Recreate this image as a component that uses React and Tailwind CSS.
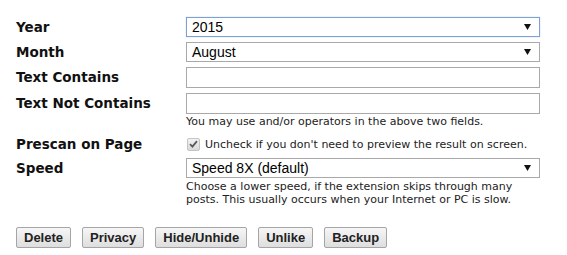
import React from "react";

const label = "w-[186px] shrink-0 pl-4 text-[13.5px] font-bold text-[#111] leading-[20px] [font-family:'DejaVu_Sans',Verdana,sans-serif]";
const small = "text-[11px] leading-[13px] text-[#222] [font-family:'DejaVu_Sans',Tahoma,sans-serif]";

function Select({ value, focused }) {
  return (
    <div
      className={`w-[354px] h-[20px] flex items-center justify-between bg-white pl-[5px] pr-[8px] border ${
        focused ? "border-[#7da2ce] shadow-[0_0_1px_#9ec3ea]" : "border-[#a9a9a9]"
      }`}
    >
      <span className="text-[14px] text-black [font-family:'Liberation_Sans',Arial,sans-serif] leading-none">{value}</span>
      <svg width="7" height="6" viewBox="0 0 7 6"><path d="M0 0H7L3.5 6Z" fill="#111" /></svg>
    </div>
  );
}

function Input() {
  return <div className="w-[354px] h-[21px] bg-white border border-[#a9a9a9]" />;
}

function Btn({ children }) {
  return (
    <div className="h-[21px] px-[7px] flex items-center border border-[#a5a5a5] rounded-[2px] bg-gradient-to-b from-[#f6f6f6] to-[#dedede] text-[13px] font-bold text-[#222] [font-family:'Liberation_Sans',Arial,sans-serif] leading-none">
      {children}
    </div>
  );
}

export default function App() {
  return (
    <div className="w-[567px] h-[255px] bg-white pt-[17px]">
      <div className="flex items-start">
        <div className={label}>Year</div>
        <Select value="2015" focused />
      </div>
      <div className="flex items-start mt-[5px]">
        <div className={label}>Month</div>
        <Select value="August" />
      </div>
      <div className="flex items-start mt-[5px]">
        <div className={label}>Text Contains</div>
        <Input />
      </div>
      <div className="flex items-start mt-[5px]">
        <div className={label}>Text Not Contains</div>
        <div>
          <Input />
          <div className={small + " mt-[1px]"}>You may use and/or operators in the above two fields.</div>
        </div>
      </div>
      <div className="flex items-center mt-[6px]">
        <div className={label}>Prescan on Page</div>
        <div className="flex items-center">
          <div className="ml-[1px] w-[13px] h-[13px] border border-[#c4c4c4] rounded-[2px] bg-gradient-to-b from-[#f2f2f2] to-[#dadada] flex items-center justify-center">
            <svg width="9" height="8" viewBox="0 0 9 8">
              <path d="M1 4.2L3.4 6.6L8 1.2" fill="none" stroke="#5a5a5a" strokeWidth="1.8" />
            </svg>
          </div>
          <span className={small + " ml-[5px]"}>Uncheck if you don't need to preview the result on screen.</span>
        </div>
      </div>
      <div className="flex items-start mt-[4px]">
        <div className={label}>Speed</div>
        <div>
          <Select value="Speed 8X (default)" />
          <div className={small + " mt-[2px]"}>
            Choose a lower speed, if the extension skips through many
            <br />
            posts. This usually occurs when your Internet or PC is slow.
          </div>
        </div>
      </div>
      <div className="flex gap-[11px] pl-4 mt-[21px]">
        <Btn>Delete</Btn>
        <Btn>Privacy</Btn>
        <Btn>Hide/Unhide</Btn>
        <Btn>Unlike</Btn>
        <Btn>Backup</Btn>
      </div>
    </div>
  );
}
